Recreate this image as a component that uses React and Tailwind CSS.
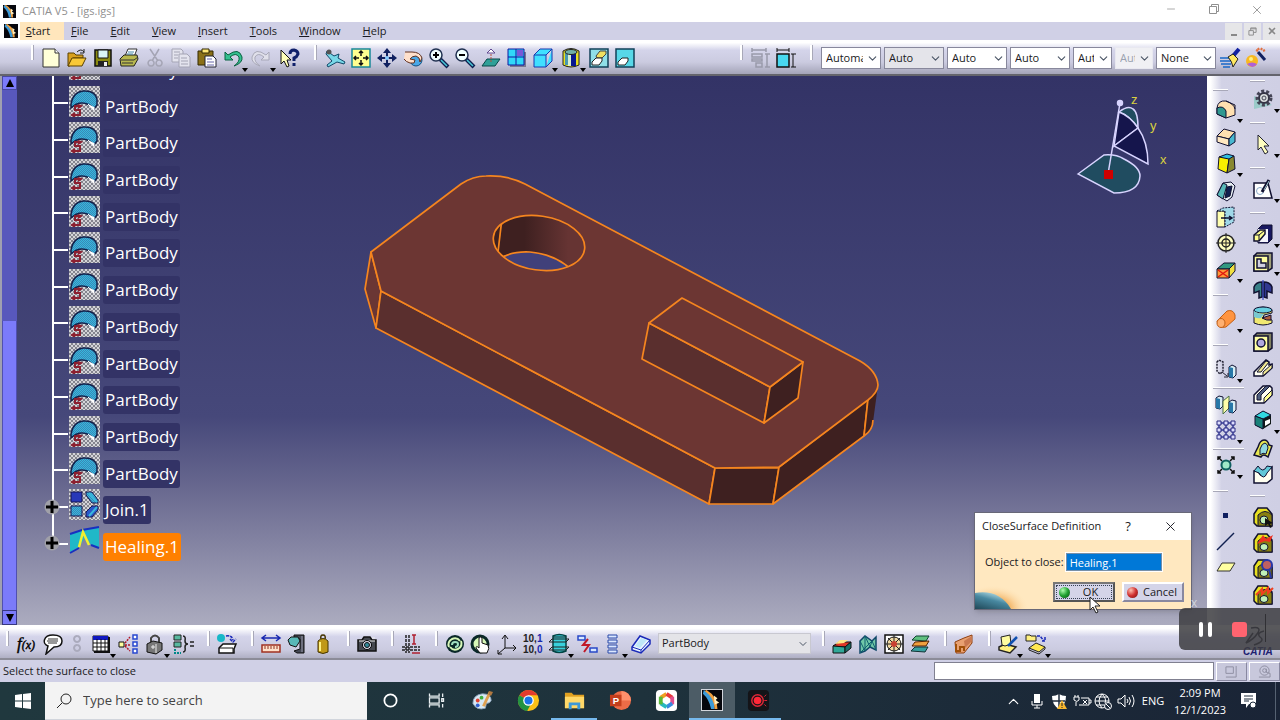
import clsx from 'clsx';
import { ChevronDown, ChevronUp, X, Minus } from 'lucide-react';

const K = '#101030';

// Every toolbar glyph is drawn on a 22x22 grid.
const ICONS = {
  newFile: <><path d="M3 2h12l4 4v14H3z" fill="#ffffd8" stroke="#333" /><path d="M15 2v4h4" fill="#fff" stroke="#333" /></>,
  open: <><path d="M2 6h6l2 2h7v3H7l-3 8H2z" fill="#d8a020" stroke="#5a4000" /><path d="M2 19 6 11h14l-4 8z" fill="#f8c838" stroke="#5a4000" /><path d="M11 5q4-4 7 0m0-3v4h-4" fill="none" stroke="#222" /></>,
  save: <><path d="M3 3h16v16H3z" fill="#8a8a10" stroke="#111" strokeWidth="1.5" /><path d="M6 3h10v8H6z" fill="#d8f4f4" stroke="#111" /><path d="M6 14h10v5H6z" fill="#222" /><path d="M12 15h3v4h-3z" fill="#eee" /></>,
  print: <><path d="m7 9 3-7h9l-3 8z" fill="#fff" stroke="#333" /><path d="m2 12 4-4h13l1 4-4 7H3z" fill="#b8b850" stroke="#222" /><path d="M3 13h13l4-3M4 16h11" fill="none" stroke="#333" /><path d="M10 5h6M9 7h6" stroke="#48a" /></>,
  cut: <path d="m6 2 8 12M15 2 8 14M7 13a3 3 0 1 0 .1 0M15 13a3 3 0 1 0 .1 0" fill="none" stroke="#a4a4b4" strokeWidth="1.5" />,
  copy: <><path d="M2 2h9l2 2v11H2z" fill="#e4e4ee" stroke="#a4a4b4" /><path d="M9 7h8l3 3v10H9z" fill="#e4e4ee" stroke="#a4a4b4" /><path d="M4 5h6M4 8h4M4 11h4m3 0h6m-6 3h7m-7 3h7" stroke="#a4a4b4" /></>,
  paste: <><path d="M2 4h15v14H2z" fill="#8a7018" stroke="#332800" /><path d="M6 2h7v4H6z" fill="#ffe878" stroke="#332800" /><path d="M9 9h8l3 3v8H9z" fill="#fff" stroke="#223" /><path d="M11 12h5m-5 3h7m-7 3h7" stroke="#66a" /></>,
  undo: <path d="M3 5v8h8L8 10q6-5 9 0 1 5-5 9 9-3 8-9-3-10-14-2z" fill="#34c090" stroke="#086040" />,
  redo: <path d="M19 5v8h-8l3-3q-6-5-9 0-1 5 5 9-9-3-8-9 3-10 14-2z" fill="#e0e0ea" stroke="#a8a8b8" />,
  help: <><path d="M3 3v14l3-3 3 6 2-1-2-6h4z" fill="#ffffb8" stroke="#111" /><path d="M12 7q0-4 4-4 4 1 4 4-1 3-4 4v3m0 2v3" fill="none" stroke="#10206a" strokeWidth="3" /></>,
  plane: <><path d="m3 4 7 5 5-2-1 4 7 4-1 2-7-2-9 5-1-2 5-4-6-7z" fill="#78d8e8" stroke="#104868" /><circle cx="5" cy="5" r="2.500" fill="#555" /></>,
  fit: <><path d="M2 2h18v18H2z" fill="#ffff90" stroke="#188898" strokeWidth="1.5" /><path d="M11 4v5M9 6l2-2 2 2M11 18v-5m-2 3 2 2 2-2M4 11h5M6 9l-2 2 2 2m12-2h-5m3-2 2 2-2 2" fill="none" stroke="#111" strokeWidth="1.5" /></>,
  pan: <><path d="M11 3v16M3 11h16" stroke="#102060" strokeWidth="2" /><path d="m11 1 4 5H7zm0 20 4-5H7zM1 11l5-4v8zm20 0-5-4v8z" fill="#102060" /><circle cx="11" cy="11" r="2" fill="#8cf" /></>,
  rotate: <><circle cx="14" cy="13" r="6" fill="#4aa8e8" stroke="#105080" /><path d="M3 5h7q8 0 10 6l-2 4q0-5-4-6-4 0-6 3l5 1-1 3H8q-4-1-6-4" fill="#ffe0cc" stroke="#603020" /></>,
  zoomIn: <><path d="m12 12 8 8" stroke="#102050" strokeWidth="4" /><path d="m13 13 6 6" stroke="#48c8d8" strokeWidth="1.5" /><circle cx="8" cy="8" r="6" fill="#f0ffff" stroke="#203050" strokeWidth="1.5" /><path d="M5 8h6M8 5v6" stroke="#000" strokeWidth="2" /></>,
  zoomOut: <><path d="m12 12 8 8" stroke="#102050" strokeWidth="4" /><path d="m13 13 6 6" stroke="#48c8d8" strokeWidth="1.5" /><circle cx="8" cy="8" r="6" fill="#f0ffff" stroke="#203050" strokeWidth="1.5" /><path d="M5 8h6" stroke="#000" strokeWidth="2" /></>,
  normal: <><path d="m2 19 5-7h13l-5 7z" fill="#30a098" stroke="#084848" /><path d="M11 15V5" stroke="#b05040" strokeDasharray="2 1" /><path d="m7 6 4-4 4 4z" fill="#fff" stroke="#604890" /></>,
  multi: <><path d="M4 5h16v15H4z" fill="#777790" /><path d="M2 2h16v16H2z" fill="#30d8f8" stroke="#1018a0" /><path d="M11 3h6v6h-6z" fill="#7858d8" /><path d="M10 2v16M2 10h16" stroke="#1018a0" /></>,
  cube: <path d="M2 8h12v12H2zl6-6h12l-6 6m0 12 6-6V2" fill="#40e0ff" stroke="#1838b0" strokeLinejoin="round" />,
  cylinder: <><path d="M3 4q8-5 16 0v14q-8 4-16 0z" fill="#e8e020" stroke="#222" /><path d="M5 6v12h3V6z" fill="#4898b0" /><path d="M8 6h3v13H8z" fill="#d8f0d0" /><path d="M11 6h5v13h-5z" fill="#081890" /><ellipse cx="11" cy="5" rx="6" ry="2.500" fill="#70b0a8" stroke="#222" /></>,
  hideShow: <><path d="M2 2h18v18H2z" fill="#90e0e8" stroke="#124058" strokeWidth="1.5" /><path d="m8 9 4-5h6v3l-4 4H9z" fill="#f0e060" stroke="#444" /><path d="m4 15 4-4h6v3l-3 4H4z" fill="#fff" stroke="#222" /></>,
  swap: <><path d="M2 2h18v18H2z" fill="#58d8e8" stroke="#124058" strokeWidth="1.5" /><path d="m4 15 4-4h6v3l-3 4H4z" fill="#fff" stroke="#222" /></>,
  dimOff: <path d="M3 3h14M3 1v4m14-4v4M3 7h10v3H3zm0 5h10v2H3zm4 4h6v4H7zM16 7h5M18 7v13m-2 0h5" fill="none" stroke="#999aaa" strokeWidth="1.5" />,
  dim: <><path d="M2 7h12v13H2z" fill="#48d8f0" stroke="#111" strokeWidth="1.5" /><path d="M2 1v4m12-4v4M2 3h12M16 7h5m-5 13h5M18 7v13" stroke="#111" /></>,
  brush: <><path d="m20 2-6 7" stroke="#1020a0" strokeWidth="4" /><path d="M1 11h10M1 14h11M2 17h10M4 20h7" stroke="#1868c8" strokeWidth="1.5" /><path d="m9 10 5-3 5 5-5 8q-1-6-5-10z" fill="#ffe860" stroke="#222" /></>,
  ball: <><circle cx="7" cy="14" r="6" fill="#f8b820" /><path d="M2 17q5-3 10 0-4 6-10 0" fill="#b060d8" /><circle cx="6" cy="12" r="2" fill="#fff080" /><path d="m13 5 7 8" stroke="#102060" strokeWidth="3" /><path d="m11 3 2 1m0-3 1 2m3-2-1 2m4 0-2 1" stroke="#e07040" strokeWidth="2" /></>,
  // knowledge / measure / tools row
  fx: <text x="1" y="16" fontSize="17" fontStyle="italic" fontFamily="Liberation Serif, serif" fill="#000" stroke="#000" strokeWidth=".4">f<tspan fontSize="12">(x)</tspan></text>,
  comment: <><path d="M11 2c5 0 9 2 9 6s-3 6-8 6l-8 7 2-8C0 11 1 2 11 2z" fill="#fff" stroke="#111" strokeWidth="1.5" /><path d="M6 6h10M5 8h11M6 10h9" stroke="#333" /></>,
  chainOff: <path d="M11 3a3 3 0 1 0 .1 0M11 12a3 3 0 1 0 .1 0" fill="none" stroke="#aaaabc" strokeWidth="2" />,
  table: <><path d="M4 4h16v16H4z" fill="#111" /><path d="M3 3h15v15H3z" fill="#fff" stroke="#111" /><path d="M3 3h15v4H3z" fill="#1018c0" /><path d="M3 10h15M3 14h15M7 6v12m4-12v12m4-12v12" stroke="#111" /></>,
  graph: <><path d="M1 9h5v5H1z" fill="#ffffa0" stroke="#111" /><path d="M15 2h4v4h-4zm0 7h4v4h-4zm0 7h4v4h-4z" fill="#fff" stroke="#2848d0" strokeWidth="1.5" /><path d="m7 10 5-6M7 12h5m-5 1 5 5" stroke="#b01828" strokeWidth="1.5" strokeDasharray="2 1" /></>,
  lock: <><path d="M7 10V5q4-5 8 0v5" fill="none" stroke="#444" strokeWidth="2" /><path d="m3 11 6-3 9 2v7l-6 4-9-2z" fill="#777" stroke="#111" /><path d="M12 11v9M9 12v4M7 14h4" stroke="#eee" /></>,
  design: <><path d="M2 2h7v5H2zM2 9h7v5H2z" fill="#58b8a0" stroke="#222" /><path d="M3 16v4h6" fill="none" stroke="#088" strokeDasharray="2 1" strokeWidth="2" /><path d="M11 3q3 0 2 5 0 3 3 3-3 0-3 3 1 5-2 5m7-10h4m-4 4h4" fill="none" stroke="#222" strokeWidth="1.5" /></>,
  catalog: <><circle cx="5" cy="5" r="4" fill="#18b8c8" /><path d="m3 15 4-4h13l-2 5v4H3z" fill="#fff" stroke="#111" strokeWidth="1.5" /><path d="M3 15h14v5" fill="none" stroke="#111" /><path d="M10 3q6-1 7 4m-3-1 3 3 3-3" fill="none" stroke="#1828b8" strokeWidth="1.5" strokeDasharray="3 1" /></>,
  ruler: <><path d="M2 5h18M6 2 2 5l4 3M16 2l4 3-4 3" fill="none" stroke="#1828b0" strokeWidth="1.5" /><path d="M2 12h18v7H2z" fill="#ffe0c8" stroke="#a03020" strokeWidth="1.5" /><path d="M5 13v3m3-3v3m3-3v3m3-3v3m3-3v3" stroke="#903020" /></>,
  caliper: <><path d="M8 2h10v18h-7l-3-2 6-2V6H8z" fill="#444854" stroke="#111" /><path d="m2 7 3-3h7l2 4-4 6-6-2z" fill="#58b8b8" stroke="#111" /><path d="M16 3v16" stroke="#99a" /></>,
  weight: <><path d="M6 8q5-5 10 0v11q-5 3-10 0z" fill="#c09818" stroke="#443400" /><path d="M8 9v9" stroke="#fff080" strokeWidth="2" /><path d="M9 6q-1-4 2-4t2 4" fill="none" stroke="#443400" strokeWidth="1.5" /></>,
  camera: <><path d="M2 7h4l2-3h6l2 3h4v11H2z" fill="#454850" stroke="#111" strokeWidth="1.5" /><path d="M3 8h16M16 5h3" stroke="#eee" /><circle cx="11" cy="12" r="4.500" fill="#dde" stroke="#000" /><circle cx="11" cy="12" r="2.500" fill="#389" stroke="#111" /></>,
  section: <><path d="M6 2v18M2 14h18M2 17h18M9 2v18" stroke="#222" strokeWidth="1.5" strokeDasharray="3 1" /><path d="M12 2h4m-2 0v9m-2 0h4m-4 9h8" stroke="#b02030" strokeWidth="1.5" /></>,
  update: <><circle cx="11" cy="11" r="9" fill="#0a2828" /><path d="M16 8q-3-4-8-2-5 3-3 8 M6 14q3 4 8 2 5-3 3-8" fill="none" stroke="#d8f8b8" strokeWidth="2" /><path d="M8 12q0-3 3-3t3 2q0 3-3 3" fill="none" stroke="#a0e0c0" strokeWidth="2" /></>,
  updateHand: <><circle cx="10" cy="11" r="8" fill="#d8f8b8" stroke="#0a2828" strokeWidth="3" /><path d="M9 14V5q2-2 3 0v5l6 2q2 3-1 8H10l-4-5q0-3 3 0z" fill="#fff" stroke="#111" /></>,
  axis: <path d="M9 15V3M6 6l3-4 3 4m-3 9h11m-3-3 3 3-3 3M9 15l-7 6m0-4v4h4" fill="none" stroke="#111" />,
  mean: <text fontSize="10" fontWeight="700" fontFamily="Liberation Sans, sans-serif" fill="#222"><tspan x="1" y="9">10,</tspan><tspan fill="#1828b0">1</tspan><tspan x="1" y="20">10,</tspan><tspan fill="#1828b0">0</tspan></text>,
  cylFrame: <><path d="M5 3q6-3 13 0v15q-7 3-13 0z" fill="#38d0dc" stroke="#044" strokeWidth="1.5" /><path d="M5 4h13M1 9l3-3h17l-3 3zm0 8 3-3h17l-3 3z" fill="none" stroke="#222" /></>,
  catch: <><path d="M2 3h7v4H2zM14 15h7v4h-7z" fill="#d8e8ff" stroke="#2848c8" strokeWidth="1.5" /><path d="m12 6-5 6h6l-5 7" fill="none" stroke="#c01828" strokeWidth="2" /></>,
  stackRows: <path d="M6 2h9v3H6zm0 5h9v3H6zm0 5h9v3H6zm0 5h9v3H6z" fill="#dce8ff" stroke="#2848a8" />,
  body: <><path d="m2 14 8-11 10 4v4L11 20l-9-3z" fill="#e8f4ff" stroke="#1828b8" strokeWidth="1.5" /><path d="m2 14 9 3 9-10M11 17v3" fill="none" stroke="#1828b8" /><path d="m5 13 6-8 6 2-7 8z" fill="#c0e8f8" /></>,
  shape: <><path d="m2 13 6-4h12l-6 5z" fill="#e03828" stroke="#111" /><path d="m2 13 12 1v6H2z" fill="#30a898" stroke="#111" /><path d="m14 14 6-5v6l-6 5z" fill="#187068" stroke="#111" /><path d="m4 11 5-4h8l-4 3z" fill="#ffe888" /></>,
  mesh: <><path d="m3 8 5-5 7 5 4-4v13l-6-3-5 4-5 2z" fill="#70c8a8" stroke="#104868" strokeWidth="1.5" /><path d="m3 8 5 10L8 3l5 11 2-6 4 9M3 20l12-12" fill="none" stroke="#106070" /></>,
  target: <><path d="M2 2h18v18H2z" fill="#fff" stroke="#111" strokeWidth="1.5" /><circle cx="11" cy="11" r="7" fill="#f0d8a0" stroke="#111" /><path d="M2 11h18M11 2v18M5 5l12 12M17 5 5 17" stroke="#222" /><circle cx="11" cy="11" r="3" fill="#c84030" /></>,
  layers: <><path d="m3 7 4-4h13l-3 5z" fill="#60c080" stroke="#143" /><path d="m3 13 3-4 14-1-3 5z" fill="#f0a040" stroke="#520" /><path d="m2 18 4-4h13l-3 5z" fill="#38a0a0" stroke="#133" /></>,
  brick: <><path d="m2 9 9-4 8-3v8l-8 10H3z" fill="#e8a070" stroke="#904010" /><path d="M3 11v7h4v-4h4v4" fill="none" stroke="#a05008" strokeWidth="2" /><path d="m11 8 8-5v5l-7 7z" fill="#c87850" /></>,
  editBox: <><path d="m2 14 6-3 11 3-6 6-11-3z" fill="#fff080" stroke="#222" strokeWidth="1.5" /><path d="m5 12-1-8 9-2 1 9-6 2z" fill="#fffca0" stroke="#222" /><path d="m20 4-9 9" stroke="#1050b0" strokeWidth="2.5" /></>,
  moveBox: <><path d="M1 2h4l1 1h5v5H1z" fill="#fff080" stroke="#222" /><path d="M12 3h3l4 5m1-4v4h-4" fill="none" stroke="#1828b8" strokeWidth="1.5" strokeDasharray="3 1" /><path d="m4 15 7-5 9 4-6 5z" fill="#ffe850" stroke="#222" /><path d="M4 15v2l10 4 6-5v-2" fill="none" stroke="#222" /></>,
  // right column
  fillet: <><path d="M2 10q1-8 9-7l9 4v10l-9 3-9-4z" fill="#ffe0b0" stroke={K} /><path d="M2 10q6-3 9 3v7l-9-4z" fill="#309890" stroke={K} /><path d="M11 3q8 3 9 8" fill="none" stroke={K} /></>,
  chamfer: <><path d="m2 10 7-7 11 3-6 7z" fill="#ffe0b0" stroke={K} /><path d="m2 10 12 3v7L2 16z" fill="#ffe8c0" stroke={K} /><path d="m14 13 6-7v10l-6 4z" fill="#48b8d0" stroke={K} /></>,
  draft: <><path d="M4 5 12 2l7 2-5 4z" fill="#30c0e0" stroke={K} /><path d="m4 5 10 2-2 14-9-4z" fill="#f8f000" stroke={K} /><path d="m14 7 5-3 1 13-8 4z" fill="#888830" stroke={K} /></>,
  shell: <><path d="m2 15 6-12 8-1 4 4-3 11-5 4z" fill="#e8f0f4" stroke={K} /><path d="m2 15 6-12 4 2-4 14z" fill="#58b8b8" stroke={K} /><path d="m12 7 5-1-2 10-5 2z" fill="#102050" stroke={K} /></>,
  thick: <><path d="M2 5h8v16H2z" fill="#ffffb0" stroke={K} /><path d="m2 5 6-3 11-1v15l-9 5V5z" fill="#a0d8e8" stroke={K} strokeDasharray="2 1" /><path d="M6 12h11m-3-2 3 2-3 2" fill="none" stroke={K} strokeWidth="1.5" /></>,
  thread: <><circle cx="11" cy="11" r="8" fill="#ffffc0" stroke="#222" strokeWidth="1.5" /><circle cx="11" cy="11" r="4" fill="#fff8b0" stroke="#222" strokeWidth="1.5" /><path d="M11 1v20M1 11h20" stroke="#222" /></>,
  removeFace: <><path d="m2 11 7-6h11l-6 6z" fill="#309880" stroke={K} /><path d="m14 11 6-6v8l-6 7z" fill="#f0e040" stroke={K} /><path d="M2 11h12v9H2z" fill="#ff9838" stroke={K} /><path d="m3 12 10 7m0-7L3 19" stroke="#e01810" strokeWidth="1.5" /></>,
  closeSurf: <><path d="M2 13 12 3q6-2 8 4v4l-9 8q-7 2-9-6z" fill="#ff9440" stroke="#c06018" /><ellipse cx="6" cy="15" rx="4" ry="4.500" fill="#ffb070" stroke="#c06018" /></>,
  translate: <><path d="m2 4 2-2 4 2v9l-3 3-3-3z" fill="none" stroke="#223" strokeDasharray="2 1" strokeWidth="1.5" /><path d="m7 14 5 4m-3 1h4v-4" fill="none" stroke="#223" /><path d="m14 9 3-2 4 2v8l-3 3-4-1z" fill="#d8eef4" stroke={K} /><path d="m14 9 4 1v10l-4-1z" fill="#2878a8" /></>,
  mirror: <><path d="m1 5 3-2 4 1v9l-3 3-4-1z" fill="#d8eef4" stroke={K} /><path d="m1 5 4 1v10l-4-1z" fill="#2878a8" /><path d="m8 8 6-5v12l-6 6z" fill="#ffffa8" stroke="#487048" /><path d="m14 9 3-2 4 1v9l-3 3-4-1z" fill="#d8eef4" stroke={K} /><path d="m14 9 4 1v10l-4-1z" fill="#2878a8" /></>,
  pattern: <><path d="M4 3v15M11 3v15M18 3v15M3 4h16M3 11h16M3 18h16" stroke="#303898" strokeWidth="1.5" /><path d="M2 2h4v4H2zm7 0h4v4H9zm7 0h4v4h-4zM2 9h4v4H2zm7 0h4v4H9zm7 0h4v4h-4zM2 16h4v4H2zm7 0h4v4H9zm7 0h4v4h-4z" fill="#dcdcff" stroke="#282880" /></>,
  scale: <><path d="M3 6V3h3m10 0h3v3m0 10v3h-3M6 19H3v-3M3 3l4 4M19 3l-4 4m4 12-4-4M3 19l4-4" fill="none" stroke="#111" strokeWidth="1.5" /><circle cx="11" cy="11" r="4.500" fill="#a0e8c8" stroke="#106060" strokeWidth="2" /></>,
  point: <path d="M8 9h5v5H8z" fill="#102060" />,
  line: <path d="M2 20 19 3" stroke="#102050" strokeWidth="1.5" />,
  plane2: <path d="m2 15 5-8h13l-5 8z" fill="#ffffa0" stroke="#333" />,
  gear: <><path d="M2 21V8l9 4 9 5z" fill="#78c8b8" opacity=".6" /><circle cx="12" cy="10" r="7" fill="none" stroke="#445" strokeWidth="3" strokeDasharray="3 2" /><circle cx="12" cy="10" r="5" fill="#d8dcdc" stroke="#334" strokeWidth="2" /><circle cx="12" cy="10" r="2" fill="none" stroke="#445" /></>,
  arrow: <path d="M6 2v15l3-3 4 7 3-2-4-6h5z" fill="#ffffc0" stroke="#223" strokeLinejoin="round" />,
  sketch: <><path d="M2 5h14l4 15H2z" fill="#fff" stroke={K} strokeWidth="1.5" /><circle cx="8" cy="13" r="3.500" fill="none" stroke="#88a8c8" /><path d="m17 2-7 12" stroke={K} strokeWidth="3" /><path d="m17 3-5 9" stroke="#a0c8d0" /></>,
  pad: <><path d="m6 6 4-4h10v14l-4 4H6z" fill="#181860" stroke={K} /><path d="M6 6h10v13H6z" fill="#f4f4fc" /><path d="m2 12 6-5h5v4l-6 7H2z" fill="#ffff90" stroke={K} strokeWidth="1.5" /><path d="M2 12h5v6m0-6 6-5" fill="none" stroke={K} /></>,
  pocket: <><path d="m2 5 3-3h15v15l-4 3H2z" fill="#a0a078" stroke={K} strokeWidth="1.5" /><path d="M2 5h14v15H2z" fill="#ffffa0" stroke={K} strokeWidth="1.5" /><path d="M5 8h4v4h5v5H5z" fill="#d0d0e0" stroke={K} strokeWidth="1.5" /></>,
  shaft: <><path d="M2 8q2-5 8-5v15l-3 1v-7l-5 2z" fill="#388088" stroke={K} strokeWidth="1.5" /><path d="M20 8q-2-5-8-5v15l3 1v-7l5 2z" fill="#303890" stroke={K} strokeWidth="1.5" /><path d="M11 1v20" stroke="#2030c0" /></>,
  groove: <><path d="M2 5q9-6 18 0v3l-8 2-1 3 9 2v3q-9 4-18 0z" fill="#f0e870" stroke={K} /><ellipse cx="11" cy="5" rx="9" ry="3" fill="#68d0e0" stroke={K} /><path d="M2 6v6q4 2 7 1l3-4q-6 0-10-3z" fill="#78c8d0" /><path d="m10 13 9-3v5q-4 1-9-2z" fill="#b06040" stroke={K} /></>,
  hole: <><path d="m2 5 3-3h15v15l-4 3H2z" fill="#808060" stroke={K} strokeWidth="1.5" /><path d="M2 5h14v15H2z" fill="#ffffa0" stroke={K} strokeWidth="1.5" /><circle cx="9" cy="12" r="4" fill="#b0a8e0" stroke={K} strokeWidth="1.5" /></>,
  rib: <><path d="m2 15 9-9 3-3 3 2v3l3-1v4l-9 8H2z" fill="#fffff0" stroke={K} strokeWidth="1.5" /><path d="m5 15 9-11 3 1-8 10zM11 15l9-8v4l-9 8z" fill="#f0e890" stroke={K} /></>,
  slot: <><path d="m2 12 9-9h7l2 2v7l-8 8H2z" fill="#fffff0" stroke={K} strokeWidth="1.5" /><path d="m5 12 9-9h4l-9 9v5H5z" fill="#506080" stroke={K} /><path d="m12 15 8-8v5l-8 8z" fill="#ffff90" stroke={K} /></>,
  stiffener: <><path d="m3 7 8-5 8 4v9l-8 5-8-4z" fill="#101818" /><path d="m3 7 8-5 8 4-8 4z" fill="#30d8e0" stroke={K} /><path d="m3 7 8 3v10l-8-4z" fill="#188078" stroke={K} /><path d="m13 12 5-2v4l-5 3z" fill="#fff" /></>,
  multiSec: <><path d="m2 18 4-8q2-7 6-7t5 5l3 1-4 11q-5-4-7 0z" fill="#e8e850" stroke={K} strokeWidth="1.5" /><path d="M8 12q2-6 5-6 3 1 3 5l-2 6q-3-2-6 1z" fill="#90d8e0" stroke={K} /></>,
  removeSec: <><path d="M2 8h4q4 9 8 0l6-4v12l-5 4H2z" fill="#fffff0" stroke={K} strokeWidth="1.5" /><path d="m2 8 4-5q5 8 9 0l5 1-5 6q-3 8-8 0z" fill="#60c8d8" stroke={K} /></>,
  annot: <><path d="m2 8 4-6h9l5 6v12H5l-3-3z" fill="#e8e020" stroke={K} strokeWidth="1.5" /><path d="M6 9q7-7 14 0v11H6z" fill="#888010" stroke={K} /><ellipse cx="12" cy="14" rx="4" ry="4" fill="#c0f0b8" stroke={K} /><path d="m13 12 8 5-3 1 2 3-2 1-2-4-3 2z" fill="#111" /></>,
  annotRed: <><path d="m2 8 4-6h9l5 6v12H5l-3-3z" fill="#e8e020" stroke={K} strokeWidth="1.5" /><path d="M6 9q7-7 14 0v11H6z" fill="#888010" stroke={K} /><ellipse cx="12" cy="15" rx="4" ry="3.500" fill="#c0f0b8" stroke={K} /><path d="m5 12 6-9 3 4 7-4-3 7-5-1z" fill="#f03020" /></>,
  annotBlue: <><path d="m2 8 4-6h9l5 6v12H5l-3-3z" fill="#e8e020" stroke={K} strokeWidth="1.5" /><path d="M6 9q7-7 14 0v11H6z" fill="#888010" stroke={K} /><ellipse cx="12" cy="15" rx="4" ry="3.500" fill="#c0f0b8" stroke={K} /><circle cx="15" cy="7" r="5" fill="#c06060" stroke="#2838a8" strokeWidth="2" /><path d="m17 11 2 9" stroke="#2838a8" strokeWidth="2" /></>,
  annotZig: <><path d="m2 8 4-6h9l5 6v12H5l-3-3z" fill="#e8e020" stroke={K} strokeWidth="1.5" /><path d="M6 9q7-7 14 0v11H6z" fill="#888010" stroke={K} /><ellipse cx="12" cy="15" rx="4" ry="3.500" fill="#c0f0b8" stroke={K} /><path d="m4 11 6-6v5l6-6v5l5-5" fill="none" stroke="#f04020" strokeWidth="2" /></>,
};

// name, then "+" when the command opens a flyout
const STANDARD = ['newFile', 'open', 'save', 'print', 'cut', 'copy', 'paste', 'undo+', 'redo+', 'help'];
const VIEW = ['plane', 'fit', 'pan', 'rotate', 'zoomIn', 'zoomOut', 'normal', 'multi', 'cube+', 'cylinder+', 'hideShow', 'swap'];
const BOTTOM = [
  'fx', 'comment', 'chainOff', 'table+', 'graph', 'lock+', 'design',
  '|', 'catalog', '|', 'ruler', 'caliper', 'weight', '|', 'camera', '|', 'section', '|',
  'update', 'updateHand', 'axis', 'mean', 'cylFrame+', 'catch', 'stackRows+', 'body',
];
const BOTTOM_RIGHT = ['|', 'shape', 'mesh', 'target', 'layers', '|', 'brick', '|', 'editBox+', 'moveBox+'];
const SIDE_A = ['fillet+', 'chamfer', 'draft+', 'shell', 'thick', 'thread', 'removeFace+', '|', 'closeSurf+', '|', 'translate+', '-', 'mirror', 'pattern+', '-', 'scale+', '|', 'point', 'line', 'plane2'];
const SIDE_B = ['gear+', '|', 'arrow+', '|', 'sketch+', '|', 'pad+', 'pocket+', 'shaft', 'groove', 'hole', 'rib', 'slot', 'stiffener+', 'multiSec', 'removeSec', '|', 'annot', 'annotRed', 'annotBlue', 'annotZig'];

const MENUS = ['File', 'Edit', 'View', 'Insert', 'Tools', 'Window', 'Help'];

const COMBOS = [
  { label: 'Fill color', value: 'Automatic', className: 'w-[60px] bg-white' },
  { label: 'Transparency', value: 'Auto', className: 'w-[60px] bg-[#e4e4ea]' },
  { label: 'Line weight', value: 'Auto', className: 'w-[60px] bg-white' },
  { label: 'Line type', value: 'Auto', className: 'w-[60px] bg-white' },
  { label: 'Point symbol', value: 'Auto', className: 'w-[39px] bg-white' },
  { label: 'Rendering', value: 'Auto', className: 'w-[38px] bg-[#f0f0f4] text-gray-400 border-[#e8e8f0]' },
  { label: 'Layer', value: 'None', className: 'w-[60px] bg-white' },
];

function Tool({ item, vertical }) {
  const flyout = item.endsWith('+');
  const name = flyout ? item.slice(0, -1) : item;
  const width = name === 'chainOff' ? 'w-[22px] justify-center' : flyout ? 'w-[28px]' : 'w-[26px]';
  return (
    <button
      title={name}
      className={clsx(
        'relative flex shrink-0 items-start px-[2px] pt-[2px]',
        vertical ? 'w-[26px]' : 'h-[26px]',
        vertical ? (flyout ? 'h-[28px]' : 'h-[26px]') : width,
      )}
    >
      <svg viewBox="0 0 22 22" className="size-[22px] shrink-0" fill="none">{ICONS[name]}</svg>
      {flyout && (
        <svg viewBox="0 0 6 4" className={clsx('absolute h-[4px] w-[6px]', vertical ? 'right-[-4px] bottom-[1px]' : 'right-0 bottom-[-1px]')}>
          <path d="M0 0h6L3 4z" fill="#000" />
        </svg>
      )}
    </button>
  );
}

function Grip({ className = 'w-[18px] pl-[6px]' }) {
  return (
    <div className={clsx('flex h-[26px] shrink-0 justify-center', className)}>
      <span className="h-[15px] w-[3px] border-r border-[#a8a8b8] bg-white"></span>
    </div>
  );
}

function ToolRow({ items }) {
  return items.map((item, i) => (item === '|' ? <Grip key={i} /> : <Tool key={i} item={item} />));
}

function SideGrip({ className }) {
  return (
    <div className={clsx('flex w-[26px] shrink-0 items-center', className)}>
      <span className="h-[2px] w-[15px] border-b border-[#a8a8b8] bg-white"></span>
    </div>
  );
}

function SideColumn({ items, gripClass }) {
  return items.map((item, i) => {
    if (item === '|') return <SideGrip key={i} className={gripClass} />;
    if (item === '-') return <div key={i} className="flex h-[7px] shrink-0 items-center"><span className="h-[2px] w-[31px] shrink-0 border-b border-[#a8a8b8] bg-white"></span></div>;
    return <Tool key={i} item={item} vertical />;
  });
}

function Combo({ label, value, className }) {
  return (
    <label className="relative block shrink-0">
      <select aria-label={label} defaultValue={value} className={clsx('block h-[22px] appearance-none border border-[#88889c] pr-[17px] pl-[4px] text-[11px] leading-[18px]', className)}>
        <option>{value}</option>
      </select>
      <ChevronDown className="pointer-events-none absolute top-[5px] right-[2px] size-[13px] text-gray-600" strokeWidth={2} />
    </label>
  );
}

function CatiaMark({ className }) {
  return (
    <svg viewBox="0 0 22 22" className={className}>
      <path d="M0 0h22v22H0z" fill="#05060c" />
      <path d="M2 0q12 6 12 21h-4Q8 10 1 4z" fill="#3c9ad8" />
      <path d="M5 0q12 7 12 21h-3Q13 8 3 1z" fill="#f0a040" />
      <path d="m13 6 4 3-2 2 4 3-5 2z" fill="#fff0c0" />
    </svg>
  );
}

function TreeIcon({ kind }) {
  const cyan = 'url(#dither)';
  return (
    <svg viewBox="0 0 31 31" className="size-[31px] shrink-0">
      <defs>
        <pattern id="checker" width="4" height="4" patternUnits="userSpaceOnUse"><path d="M0 0h4v4H0z" fill="#84848e" /><path d="M0 0h2v2H0zm2 2h2v2H2z" fill="#d4d4d8" /></pattern>
        <pattern id="dither" width="2" height="2" patternUnits="userSpaceOnUse"><path d="M0 0h2v2H0z" fill="#3888b8" /><path d="M0 0h1v1H0zm1 1h1v1H1z" fill="#38b8dc" /></pattern>
      </defs>
      {kind !== 'healing' && <path d="M0 0h31v31H0z" fill="url(#checker)" />}
      {kind === 'body' && (
        <>
          <path d="M2 18Q4 6 14 5q12-1 14 8v6l-3 4q-5-6-12-6-6 0-11 5z" fill={cyan} stroke="#12204a" strokeWidth="1.5" />
          <path d="m19 18 6 6v-3" fill="#fff" stroke="#fff" />
          <path d="M11 20H6v4h5v5H4m2-2-3 2 3 2M9 19l3 1-3 2" fill="none" stroke="#8c2030" strokeWidth="2" />
        </>
      )}
      {kind === 'join' && (
        <>
          <path d="M2 3h11v10H2z" fill="#2838b8" stroke="#141450" />
          <path d="M17 3h6l6 8v3h-6l-6-8zM2 17h11v10H2z" fill={cyan} stroke="#141450" />
          <path d="m17 23 6-6h6v4l-6 7h-6z" fill="#2858c8" stroke="#141450" />
          <path d="m20 27 8-9M20 4l8 9" stroke="#38b8dc" strokeWidth="2" />
        </>
      )}
      {kind === 'healing' && (
        <>
          <path d="m1 8 12-4 17-3v21l-8-3-5-9-7 11-9 5z" fill="#20b8c8" />
          <path d="m1 8 12-4 17-3M1 27l9-5m12-3 8 3" fill="none" stroke="#1830c0" strokeWidth="2" />
          <path d="m10 21 4-15 6 13" fill="none" stroke="#f0f030" strokeWidth="2.500" />
        </>
      )}
    </svg>
  );
}

function TreeRow({ label, kind = 'body', expandable, selected }) {
  return (
    <li className="relative flex min-h-0 flex-1 items-center pl-[35px]">
      <span className="h-[2px] w-[16px] shrink-0 bg-white"></span>
      {expandable && (
        <svg viewBox="0 0 16 16" className="absolute top-[10px] left-[27px] size-[16px]">
          <circle cx="8" cy="8" r="7.500" fill="#a0a0a8" />
          <path d="M8 2v12M2 8h12" stroke="#000" strokeWidth="3" />
        </svg>
      )}
      <span className="mb-[4px] ml-[1px]"><TreeIcon kind={kind} /></span>
      <span className={clsx('mt-[7px] ml-[3px] rounded-[3px] px-[2px] text-[17px] leading-[28px] text-white', selected ? 'bg-[#ff8000]' : 'bg-[#333366]')}>{label}</span>
    </li>
  );
}

function Model() {
  return (
    <svg viewBox="17 76 1190 549" className="absolute inset-0 h-full w-full" fill="none">
      <defs>
        <linearGradient id="bore" x1="0" x2="1"><stop offset=".35" stopColor="#3e2020" /><stop offset=".8" stopColor="#663433" /></linearGradient>
        <clipPath id="holeClip"><ellipse cx="539" cy="243" rx="46" ry="27" transform="rotate(8 539 243)" /></clipPath>
      </defs>
      <g stroke="#f5851f" strokeWidth="1.700" strokeLinejoin="round">
        <path d="m371 252-6 37 11 39 5-37z" fill="#6a3634" />
        <path d="m381 291 334 177-6 36-333-176z" fill="#5a2f2e" />
        <path d="M715 468h64l-6 36h-64z" fill="#3e2020" />
        <path d="m779 467 89-68-4 37-91 68z" fill="#3e2020" />
        <path d="M868 399q9-6 10-14l-5 37q-1 8-9 14z" fill="#3e2020" stroke="none" />
        <path d="M864 436q9-6 9-16M868 399l-4 37" />
        <path d="M371 252 461 184q12-8 25-8 22-1 39 8L860 361q17 10 18 24 0 7-10 15l-89 67-64 1-334-177z" fill="#6c3633" />
        {/* through hole, with its lower rim and the background behind it */}
        <g clipPath="url(#holeClip)">
          <path d="M490 212h98v62h-98z" fill="url(#bore)" stroke="none" />
          <path d="M498 260q12-9 32-8 26 2 44 20v10h-70z" fill="#40407a" />
          <path d="m502 218-4 34" />
        </g>
        <ellipse cx="539" cy="243" rx="46" ry="27" transform="rotate(8 539 243)" />
        <path d="m649 323 121 64-6 36-122-64z" fill="#5a2f2e" />
        <path d="m770 387 33-25-5 36-34 25z" fill="#3e2020" />
        <path d="m682 298 121 64-33 25-121-64z" fill="#6c3633" />
      </g>
      {/* compass */}
      <g stroke="#d8d4ff" strokeWidth="1.500">
        <path d="m1078 174 26-19q12-1 20 4 16 8 16 17-1 17-26 17z" fill="#204c60" />
        <path d="M1119 112q9-7 14-3 5 3 5 19-8-12-19-16z" fill="#204c60" />
        <path d="m1119 112-5 34 24-18q-8-12-19-16z" fill="#15154c" />
        <path d="m1114 146 24-18q10 14 10 36z" fill="#15154c" />
        <path d="m1120 103-12 71" />
        <circle cx="1120" cy="103" r="2.500" fill="#d8d4ff" />
      </g>
      <path d="M1104 170h9v9h-9z" fill="#d00000" />
      <g fill="#d8d040" fontSize="13" fontFamily="Liberation Sans, sans-serif">
        <text x="1131" y="104">z</text>
        <text x="1150" y="130">y</text>
        <text x="1160" y="164">x</text>
      </g>
    </svg>
  );
}

function CloseSurfaceDialog() {
  return (
    <section className="absolute right-[15px] bottom-[15px] w-[218px] border border-[#686878] bg-[#ffe8c0] shadow-md">
      <header className="flex h-[27px] items-center bg-white pl-[7px] text-[11px]">
        <h2 className="flex-1 whitespace-nowrap">CloseSurface Definition</h2>
        <button className="w-[42px] text-[13px]">?</button>
        <button aria-label="Close" className="flex w-[42px] justify-center"><X className="size-[15px]" strokeWidth={1.5} /></button>
      </header>
      <div className="relative overflow-hidden px-[7px] pt-[13px] pb-[7px] text-[11px]">
        <svg viewBox="0 0 60 40" className="absolute bottom-0 left-0 h-[40px] w-[60px]">
          <defs>
            <radialGradient id="glow" cx=".3" cy="1" r=".6"><stop offset=".4" stopColor="#f0a850" /><stop offset="1" stopColor="#ffe8c0" stopOpacity="0" /></radialGradient>
            <linearGradient id="earth" x1="0" y1="1" x2=".6" y2="0"><stop offset="0" stopColor="#204858" /><stop offset=".6" stopColor="#4888a0" /><stop offset="1" stopColor="#b8e0e8" /></linearGradient>
          </defs>
          <path d="M0 0h60v40H0z" fill="url(#glow)" />
          <path d="M0 24q24-4 36 16H0z" fill="url(#earth)" />
        </svg>
        <div className="relative flex items-center gap-[2px] pl-[3px]">
          <label htmlFor="target" className="flex-1 whitespace-nowrap">Object to close:</label>
          <input id="target" defaultValue="Healing.1" className="mr-[23px] h-[18px] w-[96px] border border-[#7890a8] bg-[#0078d7] px-[3px] text-white outline outline-white" />
        </div>
        <div className="relative mt-[11px] flex justify-end gap-[7px]">
          <button className="flex h-[20px] w-[62px] items-center border-2 border-t-[#777] border-r-[#555] border-b-[#555] border-l-[#777] bg-[#d4d4e8] p-[1px]">
            <span className="flex flex-1 items-center border border-dotted border-gray-700 leading-[12px]">
              <span className="ml-[2px] size-[11px] rounded-full bg-radial-[at_35%_30%] from-[#b0ffb0] via-[#20a030] to-[#085010]"></span>
              <span className="flex-1 text-center">OK</span>
            </span>
          </button>
          <button className="flex h-[20px] w-[62px] items-center border-2 border-t-white border-r-[#8888a0] border-b-[#8888a0] border-l-white bg-[#d4d4e8] pl-[3px]">
            <span className="size-[11px] rounded-full bg-radial-[at_35%_30%] from-[#ffc0b0] via-[#d03030] to-[#701010]"></span>
            <span className="flex-1 text-center">Cancel</span>
          </button>
        </div>
      </div>
      <svg viewBox="0 0 12 18" className="absolute right-[90px] bottom-[-5px] h-[18px] w-[12px]">
        <path d="M1 1v13l3-3 3 6 2-1-3-6h5z" fill="#fff" stroke="#222" />
      </svg>
    </section>
  );
}

function Recorder() {
  return (
    <div className="absolute right-0 bottom-[8px] flex h-[42px] w-[101px] items-center gap-[20px] rounded-l-[6px] bg-[#3c3c40]/85 pl-[20px]">
      <button aria-label="Pause" className="flex gap-[5px]">
        <span className="h-[15px] w-[4px] rounded-xs bg-white"></span>
        <span className="h-[15px] w-[4px] rounded-xs bg-white"></span>
      </button>
      <button aria-label="Stop" className="size-[15px] rounded-[3px] bg-[#ff6470]"></button>
      <span className="absolute top-[6px] right-[14px] h-[28px] w-px bg-[#303034]"></span>
      <span className="absolute top-[-13px] left-[12px] text-[12px] leading-[16px] text-gray-300">x</span>
    </div>
  );
}

const TASKS = {
  cortana: <circle cx="12" cy="12" r="7" fill="none" stroke="#fff" strokeWidth="2" />,
  taskview: <path d="M4 4v3h11V4M4 20v-3h11v3M4 9h11v6H4zM19 4v4m0 8v4m-1-10h2v3h-2z" fill="none" stroke="#e8eef0" strokeWidth="1.500" />,
  paint: <><path d="M2 15q0-9 10-10 9 0 9 7-1 3-5 3l-1 5q-9 3-13-5z" fill="#d8e8f4" stroke="#88a0b8" /><circle cx="7" cy="12" r="2" fill="#e04030" /><circle cx="11" cy="9" r="2" fill="#40b040" /><circle cx="7" cy="17" r="2" fill="#3060d0" /><path d="m20 3-7 15" stroke="#e0a050" strokeWidth="3" /><path d="m19 2 4 1-2 4-3-1z" fill="#b07840" /></>,
  chrome: <><circle cx="12" cy="12" r="11" fill="#fbc116" /><path d="M12 12 2.500 6.500A11 11 0 0 1 21.500 6.500H12z" fill="#e33b2e" /><path d="M12 12 2.500 6.500A11 11 0 0 0 10.500 23l5-9z" fill="#229342" /><circle cx="12" cy="12" r="5.500" fill="#fff" /><circle cx="12" cy="12" r="4.200" fill="#1a73e8" /></>,
  explorer: <><path d="M2 4h7l2 2h11v14H2z" fill="#e0a020" /><path d="M2 8h20v12H2z" fill="#ffd868" /><path d="M6 21v-7h12v7h-3v-4H9v4z" fill="#3c98d8" /></>,
  powerpoint: <><circle cx="13" cy="12" r="10" fill="#ed6c47" /><path d="M13 2a10 10 0 0 1 10 10H13z" fill="#ff8f6b" /><path d="M1 6h12v12H1z" fill="#c43e1c" /><text x="4" y="16" fontSize="10" fontWeight="700" fill="#fff" fontFamily="Liberation Sans, sans-serif">P</text></>,
  hex: <><rect x="1" y="1" width="22" height="22" rx="4" fill="#fff" /><g fill="none" strokeWidth="4"><path d="m6 9 6-4" stroke="#f0a020" /><path d="m12 5 6 4" stroke="#e83838" /><path d="M18 8v8" stroke="#e05090" /><path d="m18 15-6 4" stroke="#3888e0" /><path d="m12 19-6-4" stroke="#28b8c0" /><path d="M6 16V8" stroke="#58b838" /></g></>,
  catia: null,
  recorder: <><rect x="1" y="1" width="22" height="22" rx="4" fill="#141418" /><circle cx="11" cy="12" r="6" fill="none" stroke="#e02838" strokeWidth="1.500" /><circle cx="11" cy="12" r="4" fill="#ff2838" /><path d="m18 8 2-2m-2 6h3m-3 4 2 2" stroke="#e02838" /></>,
};

function Taskbar() {
  return (
    <footer className="flex h-[38px] shrink-0 bg-linear-to-r from-[#20383e] via-[#1e323c] to-[#1a2436] text-white">
      <button aria-label="Start" className="flex w-[45px] items-center justify-center">
        <svg viewBox="0 0 16 16" className="size-[16px]"><path d="m0 2 7-1v6.500H0zM8 1l8-1v7.500H8zM0 8.500h7V15l-7-1zm8 0h8V16l-8-1z" fill="#fff" /></svg>
      </button>
      <label className="flex w-[322px] items-center gap-[11px] border-b border-gray-300 bg-[#f3f3f3] pl-[11px] text-[#222]">
        <svg viewBox="0 0 16 16" className="size-[16px] shrink-0" fill="none" stroke="currentColor"><circle cx="10" cy="6" r="5" /><path d="m6 10-5 5" /></svg>
        <input placeholder="Type here to search" className="w-full bg-transparent text-[13px] outline-none placeholder:text-[#444]" />
      </label>
      {Object.keys(TASKS).map((name) => (
        <button
          key={name}
          title={name}
          className={clsx(
            'flex w-[46px] items-center justify-center border-b-2',
            name === 'catia' && 'bg-[#4c5c66]',
            ['explorer', 'catia', 'recorder'].includes(name) ? 'border-[#76b9ed]' : 'border-transparent',
          )}
        >
          {name === 'catia'
            ? <CatiaMark className="size-[22px] border border-gray-300" />
            : <svg viewBox="0 0 24 24" className={name === 'cortana' || name === 'taskview' ? 'size-[21px]' : 'size-[23px]'}>{TASKS[name]}</svg>}
        </button>
      ))}
      <div className="ml-auto flex items-center">
        <button aria-label="Hidden icons" className="flex w-[26px] justify-center"><ChevronUp className="size-[17px]" strokeWidth={1.5} /></button>
        <svg viewBox="0 0 22 22" className="size-[22px]"><path d="M8 4h6v9H8z" fill="#fff" /><path d="M6 11v4h10v-4m-5 4v3m-3 0h6" fill="none" stroke="#fff" /></svg>
        <svg viewBox="0 0 22 22" className="size-[22px]"><path d="M11 4q3 2 7 2 0 9-7 13-7-4-7-13 4 0 7-2z" fill="#fff" /><path d="M11 4v15M4 11h13" stroke="#1c2a3a" strokeWidth="1.500" /><path d="m14 10 5 9H9z" fill="#f8b830" /><path d="M14 13v3m0 1v1" stroke="#222" /></svg>
        <svg viewBox="0 0 22 22" className="size-[22px]"><path d="M5 7V5m3 2V5M4 7h5v3q-2 3-5 0zm2 5v4m3-1h10V8h-8m8 2h2v3h-2m-6-3 4 4m0-4-4 4" fill="none" stroke="#fff" /></svg>
        <svg viewBox="0 0 22 22" className="size-[22px]"><circle cx="10" cy="11" r="7" fill="none" stroke="#fff" /><path d="M3 11h14M4 7h12M4 15h8M10 4q-6 7 0 14M10 4q5 5 3 9" fill="none" stroke="#fff" /><circle cx="16" cy="16" r="3.500" fill="#1c2a3a" stroke="#fff" /><path d="m14 14 4 4" stroke="#fff" /></svg>
        <svg viewBox="0 0 22 22" className="size-[22px]"><path d="M4 9h3l4-4v12l-4-4H4zm9 0q2 2 0 4m2-6q3 4 0 8m3-10q4 6 0 12" fill="none" stroke="#fff" /></svg>
        <span className="w-[34px] text-center text-[11px]">ENG</span>
        <div className="w-[60px] text-center text-[11px] leading-[17px]">
          <div>2:09 PM</div>
          <div>12/1/2023</div>
        </div>
        <button aria-label="Notifications" className="flex w-[38px] justify-center">
          <svg viewBox="0 0 18 18" className="size-[18px]"><path d="M1 1h15v11H9l-3 4v-4H1z" fill="#fff" /><path d="M4 4h9M4 7h9M4 9h5" stroke="#1c2a3a" /><circle cx="13" cy="13" r="3" fill="#fff" stroke="#1c2a3a" /></svg>
        </button>
        <span className="mr-[4px] ml-[7px] h-[38px] w-px bg-[#566272]"></span>
      </div>
    </footer>
  );
}

export default function App() {
  return (
    <div className="flex min-h-screen flex-col overflow-hidden bg-[#d0d0e6] font-['Open_Sans','Noto_Sans',sans-serif] text-[12px] text-[#1a1a22]">
      {/* Title bar */}
      <header className="flex h-[22px] shrink-0 items-center bg-white pl-[3px] text-[#909090]">
        <CatiaMark className="size-[13px]" />
        <h1 className="ml-[6px] text-[11px]">CATIA V5 - [igs.igs]</h1>
        <div className="ml-auto flex pr-[2px] pb-[3px]">
          <button aria-label="Minimize" className="flex w-[43px] justify-center"><Minus className="size-[12px]" strokeWidth={1.5} /></button>
          <button aria-label="Restore" className="flex w-[43px] justify-center">
            <svg viewBox="0 0 12 12" className="size-[12px]" fill="none" stroke="currentColor"><path d="M1.500 3.500h7v7h-7zM3.500 3.500v-2h7v7h-2" /></svg>
          </button>
          <button aria-label="Close" className="flex w-[43px] justify-center"><X className="size-[14px]" strokeWidth={1.5} /></button>
        </div>
      </header>

      {/* Menu bar */}
      <nav className="flex h-[18px] shrink-0 items-center">
        <span className="flex h-full w-[20px] items-center bg-white pl-[4px]"><CatiaMark className="size-[14px]" /></span>
        <button className="h-full w-[44px] bg-[#ffe6bc] pr-[8px] text-[11px] leading-[18px]"><u>S</u>tart</button>
        <div className="ml-[7px] flex gap-[22px]">
          {MENUS.map((m) => <button key={m} className="text-[11px] leading-[18px]"><u>{m[0]}</u>{m.slice(1)}</button>)}
        </div>
        <div className="ml-auto flex gap-[2px] text-[#888]">
          <button aria-label="Minimize document" className="flex h-[17px] w-[17px] items-end justify-center bg-[#e6e6e8] pb-[4px]"><span className="h-[2px] w-[6px] bg-current"></span></button>
          <button aria-label="Restore document" className="flex h-[17px] w-[17px] items-center justify-center bg-[#e6e6e8]">
            <svg viewBox="0 0 10 10" className="size-[9px]" fill="none" stroke="currentColor"><path d="M1 4h5v5H1zM3 4V1h6v5H6M3 2h6" /></svg>
          </button>
          <button aria-label="Close document" className="flex h-[17px] w-[17px] items-center justify-center bg-[#e6e6e8]"><X className="size-[10px]" strokeWidth={4} /></button>
        </div>
      </nav>

      {/* Top toolbar */}
      <div className="flex h-[36px] shrink-0 items-center border-b-2 border-[#64646c] bg-[linear-gradient(#fff_0%,#fff_8%,#d4d4ea_30%,#cbcbe0_65%,#a4a4b8_100%)] pt-[2px] pl-[20px]">
        <Grip />
        <ToolRow items={STANDARD} />
        <Grip className="w-[20px] pl-[6px]" />
        <ToolRow items={VIEW} />
        <div className="ml-auto flex items-center">
          <Grip />
          <ToolRow items={['dimOff', 'dim']} />
          <Grip />
          <div className="mr-[1px] ml-[4px] flex gap-[3px]">
            {COMBOS.map((c) => <Combo key={c.label} {...c} />)}
          </div>
          <ToolRow items={['brush', 'ball']} />
          <span className="w-[11px]"></span>
        </div>
      </div>

      <main className="flex flex-1">
        {/* Tree scrollbar */}
        <div className="flex w-[17px] shrink-0 flex-col border-l-2 border-[#a0a0b0] bg-[#7b7bfa]">
          <button aria-label="Scroll up" className="flex h-[14px] items-center justify-center border border-[#4848a0]"><svg viewBox="0 0 8 8" className="size-[8px]"><path d="m4 0 4 8H0z" fill="#000" /></svg></button>
          <div className="h-[231px] bg-[#5858bc]"></div>
          <div className="flex-1 border-x border-[#5050b0]"></div>
          <button aria-label="Scroll down" className="flex h-[15px] items-center justify-center border border-[#383880]"><svg viewBox="0 0 8 8" className="size-[8px]"><path d="M0 0h8L4 8z" fill="#000" /></svg></button>
        </div>

        {/* 3D viewport */}
        <div className="relative min-w-0 flex-1 bg-[linear-gradient(#333366_0%,#46487a_62%,#68688f_75%,#acacbf_100%)]">
          <Model />
          <div className="relative h-[490px] overflow-hidden">
            <span className="absolute top-0 left-[35px] h-[466px] w-[2px] bg-white"></span>
            <ul className="mt-[-28px] flex h-[514px] flex-col">
              {Array.from({ length: 12 }, (_, i) => <TreeRow key={i} label="PartBody" />)}
              <TreeRow label="Join.1" kind="join" expandable />
              <TreeRow label="Healing.1" kind="healing" expandable selected />
            </ul>
          </div>
          <CloseSurfaceDialog />
        </div>

        {/* Part design toolbars */}
        <aside className="flex w-[73px] shrink-0 gap-[11px] bg-[linear-gradient(90deg,#fff_0%,#fff_5%,#d2d2e6_20%,#cfcfe4_100%)] pl-[6px]">
          <div className="flex w-[26px] flex-col pt-[12px]">
            <SideGrip className="h-[3px]" />
            <span className="h-[5px]"></span>
            <SideColumn items={SIDE_A} gripClass="h-[22px]" />
          </div>
          <div className="flex w-[26px] flex-col">
            <SideGrip className="h-[10px]" />
            <SideColumn items={SIDE_B} gripClass="h-[17px]" />
          </div>
        </aside>
      </main>

      {/* Bottom toolbar */}
      <div className="relative flex h-[35px] shrink-0 items-center border-b-2 border-[#8c8c98] bg-[linear-gradient(#fff_0%,#fff_10%,#d4d4ea_35%,#cbcbe0_75%,#b0b0c4_100%)] pt-[4px]">
        <Grip className="w-[14px]" />
        <ToolRow items={BOTTOM} />
        <label className="relative ml-[4px]">
          <select aria-label="In work object" defaultValue="PartBody" className="block h-[21px] w-[153px] appearance-none border border-[#c8c8d0] bg-[#e4e4e8] pl-[3px] text-[11px]">
            <option>PartBody</option>
          </select>
          <ChevronDown className="pointer-events-none absolute top-[5px] right-[2px] size-[12px] text-gray-600" strokeWidth={2} />
        </label>
        <ToolRow items={BOTTOM_RIGHT} />
        <svg viewBox="0 0 36 32" className="mr-[2px] mb-[4px] ml-auto h-[32px] w-[36px] shrink-0">
          <path d="M9 2q12-2 6 6-3 5-11 9l7-10m11-2q-8 2-4 6 6 4-6 8" fill="none" stroke="#202030" strokeWidth="1.500" />
          <text x="1" y="29" fontSize="10" fontWeight="700" fontStyle="italic" fontFamily="Liberation Sans, sans-serif" fill="#202070">CATIA</text>
        </svg>
        <Recorder />
      </div>

      {/* Status bar */}
      <div className="flex h-[22px] shrink-0 items-center gap-[2px] pl-[3px]">
        <p className="flex-1 text-[11px]">Select the surface to close</p>
        <input aria-label="Power input" className="h-[18px] w-[280px] border border-[#808090] bg-white" />
        <button aria-label="Power input mode" className="flex h-[19px] w-[31px] items-center justify-center border border-t-white border-r-[#8888a0] border-b-[#8888a0] border-l-white bg-[#c8c8dc]">
          <svg viewBox="0 0 14 14" className="size-[13px]" fill="none" stroke="#8c8ca0"><path d="M1 2h8v7H1zm11-1v12H1" /></svg>
        </button>
        <button aria-label="Dialog area" className="flex h-[19px] w-[31px] items-center justify-center border border-t-white border-r-[#8888a0] border-b-[#8888a0] border-l-white bg-[#c8c8dc]">
          <svg viewBox="0 0 14 14" className="size-[13px]" fill="none" stroke="#8c8ca0"><circle cx="7" cy="6" r="5" /><circle cx="7" cy="6" r="2" /><path d="M9 4v4l4 1v4H1" /></svg>
        </button>
      </div>

      <Taskbar />
    </div>
  );
}
